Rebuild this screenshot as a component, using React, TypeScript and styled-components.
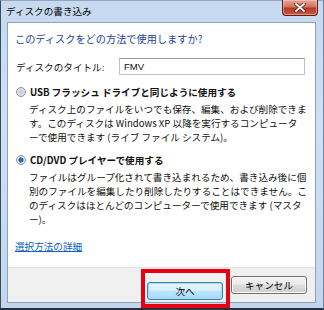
import React from "react";
import styled, { createGlobalStyle } from "styled-components";

const Global = createGlobalStyle`
  html, body { margin: 0; padding: 0; background: #fff; }
  body { font-family: "Noto Sans CJK JP", "Noto Sans", sans-serif; }
`;

const Frame = styled.div`
  width: 324px;
  height: 310px;
  box-sizing: border-box;
  display: flex;
  flex-direction: column;
  background: linear-gradient(180deg, #c6d9ef 0%, #cfe0f2 40%, #c3d6ec 100%);
  border-left: 1px solid #3b4a5c;
  border-bottom: 2px solid #26313e;
  border-top: 1px solid #8ea6c2;
  border-right: 1px solid #6f86a3;
`;

const TitleBar = styled.div`
  height: 21px;
  display: flex;
  align-items: flex-start;
  justify-content: space-between;
  flex-shrink: 0;
`;

const TitleText = styled.div`
  font-size: 9.6px;
  line-height: 12px;
  color: #000;
  padding: 4px 0 0 5px;
`;

const CloseButton = styled.div`
  width: 36px;
  height: 16px;
  margin-top: -1px;
  margin-right: 5px;
  box-sizing: border-box;
  border: 1px solid #5a1f1f;
  border-top: none;
  border-radius: 0 0 4px 4px;
  background: linear-gradient(180deg, #e9a99a 0%, #d0705e 45%, #b53a26 55%, #c9583f 100%);
  display: flex;
  align-items: center;
  justify-content: center;
  box-shadow: inset 0 0 0 1px rgba(255, 210, 200, 0.5);
`;

const Body = styled.div`
  flex: 1;
  margin: 0 7px 5px 6px;
  display: flex;
  flex-direction: column;
  border: 1px solid #8da2bd;
  background: #fff;
`;

const Main = styled.div`
  flex: 1;
  padding: 9px 0 0 7px;
  display: flex;
  flex-direction: column;
  font-size: 9.6px;
  color: #111;
`;

const Heading = styled.div`
  font-size: 10.2px;
  line-height: 14px;
  color: #1d3f9e;
`;

const TitleRow = styled.div`
  display: flex;
  align-items: center;
  margin-top: 12px;
  padding-left: 1px;
`;

const Label = styled.div`
  width: 103px;
  line-height: 14px;
`;

const TextBox = styled.div`
  width: 186px;
  height: 17px;
  box-sizing: border-box;
  border: 1px solid #b5c3d3;
  border-top-color: #8e9fb3;
  padding: 0 4px;
  display: flex;
  align-items: center;
  font-family: "Liberation Sans", "Noto Sans", sans-serif;
  font-size: 9.6px;
`;

const Option = styled.div<{ $top: number }>`
  margin-top: ${(p) => p.$top}px;
  display: flex;
  flex-direction: column;
`;

const OptionHead = styled.div`
  display: flex;
  align-items: center;
  gap: 4px;
  padding-left: 1px;
`;

const Radio = styled.span<{ $checked?: boolean }>`
  width: 10px;
  height: 10px;
  box-sizing: border-box;
  border-radius: 50%;
  border: 1px solid #8f9499;
  background: ${(p) =>
    p.$checked
      ? "radial-gradient(circle, #2a7fd6 0, #1a5fb0 2px, #d8e6f4 3px, #f4f6f8 5px)"
      : "radial-gradient(circle, #c9ccd0 0, #d8dadd 3px, #f3f4f5 5px)"};
  flex-shrink: 0;
`;

const OptionTitle = styled.div`
  font-weight: bold;
  line-height: 14px;
  color: #111;
`;

const Desc = styled.div`
  padding-left: 14px;
  margin-top: 3px;
  display: flex;
  flex-direction: column;
`;

const Line = styled.span`
  display: block;
  line-height: 14px;
  white-space: nowrap;
`;

const Link = styled.a`
  margin-top: auto;
  margin-bottom: 14px;
  color: #0a5fc4;
  text-decoration: underline;
  line-height: 14px;
  width: max-content;
`;

const Footer = styled.div`
  height: 35px;
  flex-shrink: 0;
  background: #f0f0f0;
  border-top: 1px solid #dfdfdf;
  box-sizing: border-box;
  display: flex;
  justify-content: flex-end;
  align-items: flex-start;
  gap: 8px;
  padding: 8px 8px 0 0;
`;

const Highlight = styled.div`
  position: relative;
  &::after {
    content: "";
    position: absolute;
    top: -7px;
    left: -6px;
    right: -7px;
    bottom: -8px;
    border: 4px solid #e60012;
    pointer-events: none;
  }
`;

const Button = styled.button<{ $default?: boolean }>`
  width: 76px;
  height: 18px;
  box-sizing: border-box;
  margin: 0;
  padding: 0;
  border-radius: 3px;
  font-family: "Noto Sans CJK JP", sans-serif;
  font-size: 9.6px;
  color: #000;
  border: 1px solid ${(p) => (p.$default ? "#3c7fb1" : "#707070")};
  background: ${(p) =>
    p.$default
      ? "linear-gradient(180deg, #eaf6fd 0%, #d9f0fc 45%, #bee6fd 50%, #a7d9f5 100%)"
      : "linear-gradient(180deg, #f2f2f2 0%, #ebebeb 45%, #dddddd 50%, #cfcfcf 100%)"};
  box-shadow: inset 0 0 0 1px ${(p) => (p.$default ? "#9fdcf7" : "#fcfcfc")};
`;

export default function App() {
  return (
    <>
      <Global />
      <Frame>
        <TitleBar>
          <TitleText>ディスクの書き込み</TitleText>
          <CloseButton>
            <svg width="12" height="9" viewBox="0 0 12 9">
              <path d="M2 1 L10 8 M10 1 L2 8" stroke="#4a1010" strokeWidth="3.2" strokeLinecap="round" />
              <path d="M2 1 L10 8 M10 1 L2 8" stroke="#ffffff" strokeWidth="1.8" strokeLinecap="round" />
            </svg>
          </CloseButton>
        </TitleBar>
        <Body>
          <Main>
            <Heading>このディスクをどの方法で使用しますか?</Heading>
            <TitleRow>
              <Label>ディスクのタイトル:</Label>
              <TextBox>FMV</TextBox>
            </TitleRow>
            <Option $top={10}>
              <OptionHead>
                <Radio />
                <OptionTitle>USB フラッシュ ドライブと同じように使用する</OptionTitle>
              </OptionHead>
              <Desc>
                <Line>ディスク上のファイルをいつでも保存、編集、および削除できま</Line>
                <Line>す。このディスクは Windows XP 以降を実行するコンピュータ</Line>
                <Line>ーで使用できます (ライブ ファイル システム)。</Line>
              </Desc>
            </Option>
            <Option $top={9}>
              <OptionHead>
                <Radio $checked />
                <OptionTitle>CD/DVD プレイヤーで使用する</OptionTitle>
              </OptionHead>
              <Desc>
                <Line>ファイルはグループ化されて書き込まれるため、書き込み後に個</Line>
                <Line>別のファイルを編集したり削除したりすることはできません。こ</Line>
                <Line>のディスクはほとんどのコンピューターで使用できます (マスタ</Line>
                <Line>ー)。</Line>
              </Desc>
            </Option>
            <Link href="#">選択方法の詳細</Link>
          </Main>
          <Footer>
            <Highlight>
              <Button $default>次へ</Button>
            </Highlight>
            <Button>キャンセル</Button>
          </Footer>
        </Body>
      </Frame>
    </>
  );
}
